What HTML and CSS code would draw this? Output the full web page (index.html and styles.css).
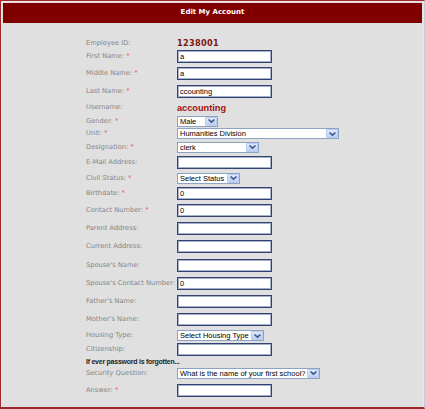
FILE: index.html
```html
<!DOCTYPE html>
<html>
<head>
<meta charset="utf-8">
<title>Edit My Account</title>
<link rel="stylesheet" href="styles.css">
</head>
<body>
<div class="panel">
  <div class="frame">
    <div class="header">Edit My Account</div>
    <div class="form">
      <div class="label">Employee ID:</div>
      <div class="field"><span class="empid">1238001</span></div>

      <div class="label">First Name: <span class="req">*</span></div>
      <div class="field"><input class="text" type="text" value="a"></div>

      <div class="label">Middle Name: <span class="req">*</span></div>
      <div class="field"><input class="text" type="text" value="a"></div>

      <div class="label">Last Name: <span class="req">*</span></div>
      <div class="field"><input class="text" type="text" value="ccounting"></div>

      <div class="label">Username:</div>
      <div class="field"><span class="username">accounting</span></div>

      <div class="label">Gender: <span class="req">*</span></div>
      <div class="field"><div class="select w-gender"><span class="val">Male</span><span class="btn"><svg width="9" height="6" viewBox="0 0 9 6"><path d="M1.5 1.5 L4.5 4.2 L7.5 1.5" fill="none" stroke="#3e5689" stroke-width="1.6"/></svg></span></div></div>

      <div class="label">Unit: <span class="req">*</span></div>
      <div class="field"><div class="select w-unit"><span class="val">Humanities Division</span><span class="btn"><svg width="9" height="6" viewBox="0 0 9 6"><path d="M1.5 1.5 L4.5 4.2 L7.5 1.5" fill="none" stroke="#3e5689" stroke-width="1.6"/></svg></span></div></div>

      <div class="label">Designation: <span class="req">*</span></div>
      <div class="field"><div class="select w-desig"><span class="val">clerk</span><span class="btn"><svg width="9" height="6" viewBox="0 0 9 6"><path d="M1.5 1.5 L4.5 4.2 L7.5 1.5" fill="none" stroke="#3e5689" stroke-width="1.6"/></svg></span></div></div>

      <div class="label">E-Mail Address:</div>
      <div class="field"><input class="text" type="text" value=""></div>

      <div class="label">Civil Status: <span class="req">*</span></div>
      <div class="field"><div class="select w-civil"><span class="val">Select Status</span><span class="btn"><svg width="9" height="6" viewBox="0 0 9 6"><path d="M1.5 1.5 L4.5 4.2 L7.5 1.5" fill="none" stroke="#3e5689" stroke-width="1.6"/></svg></span></div></div>

      <div class="label">Birthdate: <span class="req">*</span></div>
      <div class="field"><input class="text" type="text" value="0"></div>

      <div class="label">Contact Number: <span class="req">*</span></div>
      <div class="field"><input class="text" type="text" value="0"></div>

      <div class="label">Parent Address:</div>
      <div class="field"><input class="text" type="text" value=""></div>

      <div class="label">Current Address:</div>
      <div class="field"><input class="text" type="text" value=""></div>

      <div class="label">Spouse's Name:</div>
      <div class="field"><input class="text" type="text" value=""></div>

      <div class="label">Spouse's Contact Number:</div>
      <div class="field"><input class="text" type="text" value="0"></div>

      <div class="label">Father's Name:</div>
      <div class="field"><input class="text" type="text" value=""></div>

      <div class="label">Mother's Name:</div>
      <div class="field"><input class="text" type="text" value=""></div>

      <div class="label">Housing Type:</div>
      <div class="field"><div class="select w-housing"><span class="val">Select Housing Type</span><span class="btn"><svg width="9" height="6" viewBox="0 0 9 6"><path d="M1.5 1.5 L4.5 4.2 L7.5 1.5" fill="none" stroke="#3e5689" stroke-width="1.6"/></svg></span></div></div>

      <div class="label">Citizenship:</div>
      <div class="field"><input class="text" type="text" value=""></div>

      <div class="section">If ever password is forgotten...</div>

      <div class="label">Security Question:</div>
      <div class="field"><div class="select w-question"><span class="val">What is the name of your first school?</span><span class="btn"><svg width="9" height="6" viewBox="0 0 9 6"><path d="M1.5 1.5 L4.5 4.2 L7.5 1.5" fill="none" stroke="#3e5689" stroke-width="1.6"/></svg></span></div></div>

      <div class="label">Answer: <span class="req">*</span></div>
      <div class="field"><input class="text" type="text" value=""></div>
    </div>
  </div>
</div>
</body>
</html>
```
FILE: styles.css
```css
html, body {
  margin: 0;
  padding: 0;
  background: #ffffff;
}

.panel {
  width: 425px;
  height: 409px;
  box-sizing: border-box;
  border: 1px solid #9c2a2a;
  border-bottom-width: 2px;
  border-right-color: #c9c9d2;
  background: #e0e0e0;
}

.frame {
  height: 100%;
  box-sizing: border-box;
  border: 1px solid #f3e3e3;
  border-bottom-color: #e0e0e0;
}

.header {
  margin: 1px 1px 0 1px;
  height: 20px;
  box-sizing: border-box;
  padding-top: 5px;
  background: #800000;
  color: #ffffff;
  font-family: "DejaVu Sans", Verdana, sans-serif;
  font-weight: bold;
  font-size: 7px;
  line-height: 9px;
  text-align: center;
}

.form {
  display: grid;
  grid-template-columns: 91px 1fr;
  grid-template-rows: 12px 15px 19px 17px 15px 12px 13px 14px 16px 16px 15px 18px 18px 19px 18px 18px 18px 18px 15px 13px 11px 12px 23px;
  padding: 14px 0 0 84px;
}

.label {
  align-self: center;
  font-family: "DejaVu Sans", Verdana, sans-serif;
  font-size: 6.7px;
  line-height: 9px;
  color: #858585;
  white-space: nowrap;
}

.req {
  color: #e05858;
}

.field {
  align-self: center;
  display: flex;
  align-items: center;
}

.section {
  grid-column: 1 / -1;
  align-self: center;
  font-family: "Liberation Sans", Arial, sans-serif;
  font-weight: bold;
  font-size: 7px;
  letter-spacing: -0.25px;
  line-height: 9px;
  color: #262626;
  white-space: nowrap;
}

.empid {
  font-family: "DejaVu Sans", Verdana, sans-serif;
  font-weight: bold;
  font-size: 8.2px;
  letter-spacing: 0.3px;
  line-height: 10px;
  color: #7c1616;
}

.username {
  font-family: "Liberation Sans", Arial, sans-serif;
  font-weight: bold;
  font-size: 9.2px;
  line-height: 10px;
  color: #a01010;
}

.text {
  width: 95px;
  height: 13px;
  box-sizing: border-box;
  margin: 0;
  padding: 0 2px;
  border: 1px solid #34426f;
  box-shadow: inset 0 0 0 1px #a5b0cf;
  background: #ffffff;
  font-family: "Liberation Sans", Arial, sans-serif;
  font-size: 7.5px;
  color: #000000;
  outline: none;
}

.select {
  display: flex;
  align-items: center;
  justify-content: space-between;
  height: 11px;
  box-sizing: border-box;
  border: 1px solid #8ea3c4;
  background: #ffffff;
  font-family: "Liberation Sans", Arial, sans-serif;
  font-size: 7.5px;
  line-height: 9px;
  color: #000000;
  white-space: nowrap;
  overflow: hidden;
}

.select .val {
  padding-left: 2px;
}

.select .btn {
  flex: none;
  display: flex;
  align-items: center;
  justify-content: center;
  width: 12px;
  height: 9px;
  box-sizing: border-box;
  border: 1px solid #b9cbef;
  border-radius: 1px;
  background: linear-gradient(#dfe8fc, #bccff6);
}

.w-gender { width: 41px; }
.w-unit { width: 162px; }
.w-desig { width: 82px; }
.w-civil { width: 63px; }
.w-housing { width: 87px; }
.w-question { width: 143px; }
```
